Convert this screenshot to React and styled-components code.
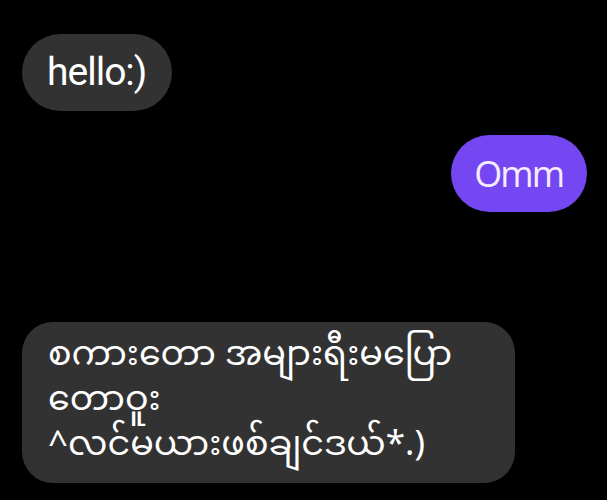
import styled, { createGlobalStyle } from "styled-components";

const GlobalStyle = createGlobalStyle`
    body {
        margin: 0;
        background: #000;
    }
`;

const Thread = styled.div`
    display: flex;
    flex-direction: column;
    padding: 34px 20px 0 22px;
    min-height: 500px;
    box-sizing: border-box;
    background: #000;
`;

const Bubble = styled.div`
    align-self: ${(p) => (p.$mine ? "flex-end" : "flex-start")};
    background: ${(p) => (p.$mine ? "#7547f2" : "#323232")};
    color: ${(p) => (p.$mine ? "#f6ecff" : "#ffffff")};
    margin-top: ${(p) => p.$gap || 0}px;
`;

const PillBubble = styled(Bubble)`
    height: 77px;
    line-height: 77px;
    border-radius: 39px;
    padding: ${(p) => (p.$mine ? "0 24px 0 23px" : "0 26px 0 25px")};
    font-family: ${(p) => (p.$mine ? '"Open Sans"' : "Roboto")}, "Liberation Sans", sans-serif;
    font-size: ${(p) => (p.$mine ? 36 : 39)}px;
    letter-spacing: ${(p) => (p.$mine ? -2 : -1)}px;
`;

const TextBubble = styled(Bubble)`
    width: 493px;
    box-sizing: border-box;
    border-radius: 31px;
    padding: 13px 20px 13px 26px;
    font-family: "Noto Sans Myanmar", "Padauk", "Myanmar Text", "Noto Sans", sans-serif;
    font-size: 35px;
    line-height: 45px;
`;

const Line = styled.span`
    display: block;
    white-space: nowrap;
`;

const App = () => {
    return (
        <>
            <GlobalStyle />
            <Thread>
                <PillBubble>hello:)</PillBubble>
                <PillBubble $mine $gap={24}>Omm</PillBubble>
                <TextBubble $gap={110}>
                    <Line>စကားတော အများရီးမပြော</Line>
                    <Line>တောဝူး</Line>
                    <Line>^လင်မယားဖစ်ချင်ဒယ်*.)</Line>
                </TextBubble>
            </Thread>
        </>
    );
};

export default App;
